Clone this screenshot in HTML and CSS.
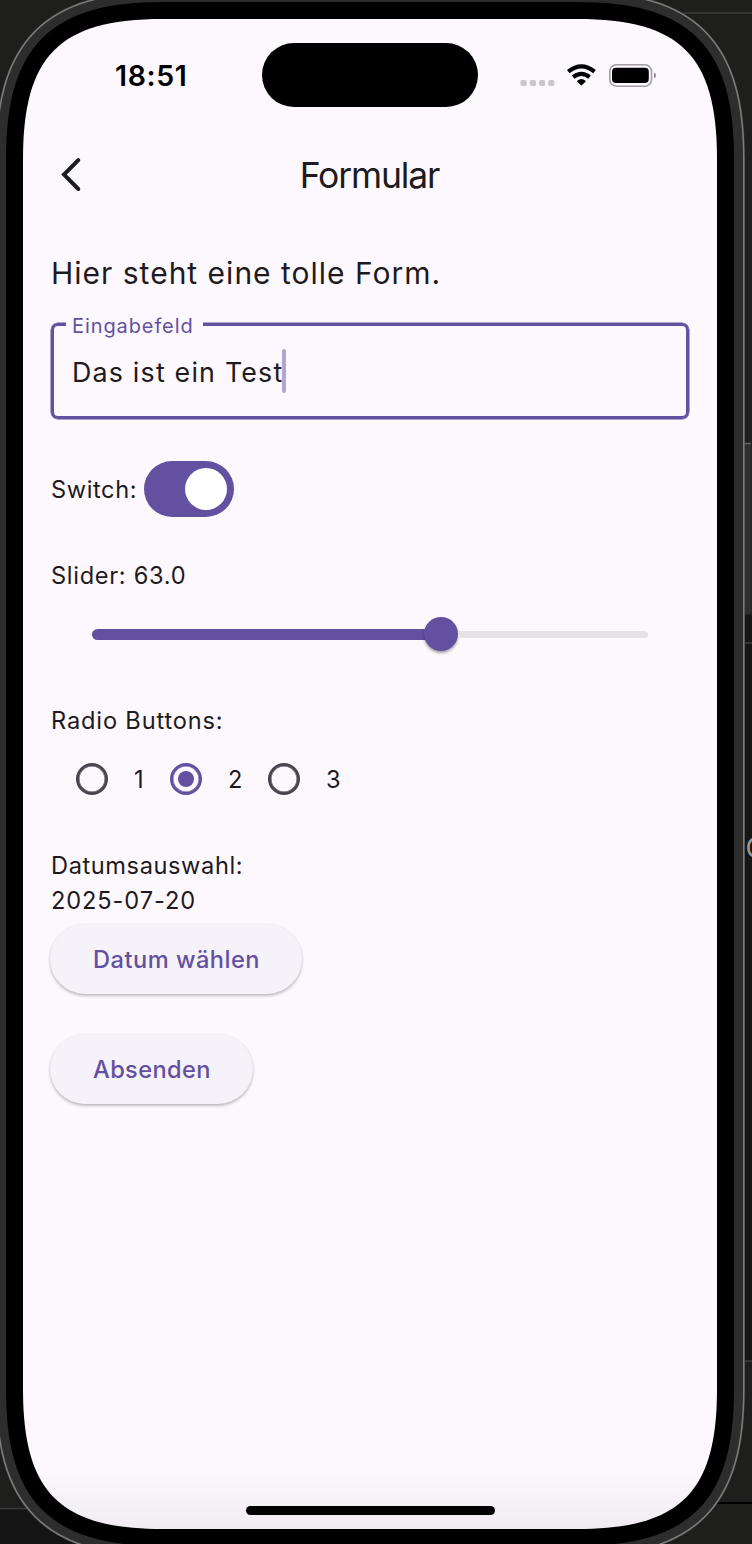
FILE: index.html
```html
<!DOCTYPE html>
<html lang="de">
<head>
<meta charset="utf-8">
<title>Formular</title>
<link rel="stylesheet" href="styles.css">
</head>
<body>
<div class="desktop">
  <svg class="backdrop" width="752" height="1544" viewBox="0 0 752 1544" aria-hidden="true">
    <defs>
      <linearGradient id="fade" x1="0" y1="1470" x2="0" y2="1529" gradientUnits="userSpaceOnUse">
        <stop offset="0" stop-color="#fdf8fe"/><stop offset="1" stop-color="#f1ecf2"/>
      </linearGradient>
      <path id="shape" d="M163 19 H577 C680.500 19 717 55.500 717 159 V1389 C717 1492.500 680.500 1529 577 1529 H163 C59.500 1529 23 1492.500 23 1389 V159 C23 55.500 59.500 19 163 19 z"/>
    </defs>
    <rect width="752" height="1544" fill="#1e1e1c"/>
    <path d="M680 13H752" stroke="#343434" stroke-width="2"/>
    <rect x="740" y="443.5" width="11.5" height="171" rx="4" fill="#2e2e2e"/>
    <path d="M740 443.5H751" stroke="#626262" stroke-width="1.5"/>
    <rect x="740" y="615" width="12" height="745" fill="#161616"/>
    <path d="M740 643H752M740 1361H752" stroke="#333" stroke-width="2"/>
    <path d="M700 1503H752" stroke="#000" stroke-width="2"/>
    <rect y="1509" width="100" height="35" fill="#141414"/>
    <path d="M0 1508.500H60" stroke="#3a3a3a" stroke-width="1.500"/>
    <text class="behind" x="745.500" y="858">C</text>
    <use href="#shape" fill="none" stroke="#3c3c3b" stroke-width="56"/>
    <use href="#shape" fill="none" stroke="#7c7c7c" stroke-width="55"/>
    <use href="#shape" fill="none" stroke="#2d2d2d" stroke-width="52"/>
    <use href="#shape" fill="none" stroke="#000" stroke-width="34"/>
    <use href="#shape" fill="url(#fade)"/>
  </svg>
  <main class="screen">
    <header class="status">
      <span class="time">18:51</span>
      <span class="island"></span>
      <svg class="indicators" width="138" height="24" viewBox="0 0 138 24" aria-label="Status">
        <g fill="#cac6cb"><rect x=".5" y="15" width="6.200" height="6" rx="1.800"/><rect x="9.800" y="15" width="6.200" height="6" rx="1.800"/><rect x="19" y="15" width="6.200" height="6" rx="1.800"/><rect x="28.200" y="15" width="6.200" height="6" rx="1.800"/></g>
        <g fill="none" stroke="#000" stroke-width="4.200"><path d="M48.300 6.700q13.100-10.600 26.200 0"/><path d="M53.200 12.100q8.200-6.500 16.400 0"/></g>
        <path d="M57.300 15.700q4.100-3.500 8.200 0q.5.500 0 1l-3.400 3.400q-.7.600-1.400 0L57.300 16.700q-.5-.5 0-1z"/>
        <rect x="89.800" y="-.200" width="41.700" height="21.400" rx="6.500" fill="none" stroke="#a19da2" stroke-width="1.600"/>
        <rect x="92" y="2.700" width="36.800" height="15.300" rx="4"/>
        <path d="M134 7.500q2 1.200 2 3t-2 3z" fill="#8c888d"/>
      </svg>
    </header>
    <div class="appbar">
      <svg class="back" width="24" height="36" viewBox="0 0 24 36"><path d="M19.300 3.200L5 17.600L19.300 32" fill="none" stroke="#1d1b20" stroke-width="4" stroke-linecap="round" stroke-linejoin="miter"/></svg>
      <h1 class="title"><span>Formular</span></h1>
    </div>
    <form class="form">
      <p class="intro"><span>Hier steht eine tolle Form.</span></p>
      <div class="field">
        <span class="field-label">Eingabefeld</span>
        <span class="field-value">Das ist ein Test</span><i class="caret"></i>
      </div>
      <div class="switch-row"><span class="sw-label">Switch:</span><span class="switch"><i class="knob"></i></span></div>
      <p class="text slider-label"><span>Slider: 63.0</span></p>
      <div class="slider"><i class="active"></i><i class="thumb"></i><i class="rest"></i></div>
      <p class="text radio-label"><span>Radio Buttons:</span></p>
      <div class="radios">
        <i class="radio"></i><span class="num n1">1</span>
        <i class="radio on"></i><span class="num n2">2</span>
        <i class="radio"></i><span class="num n3">3</span>
      </div>
      <p class="text date-label"><span>Datumsauswahl:</span></p>
      <p class="text date"><span>2025-07-20</span></p>
      <button type="button" class="button pick"><span>Datum wählen</span></button>
      <button type="button" class="button send"><span>Absenden</span></button>
    </form>
    <div class="home"></div>
  </main>
</div>
</body>
</html>
```
FILE: styles.css
```css
* { box-sizing: border-box; }
body { margin: 0; background: #1e1e1c; font-family: Inter, "Liberation Sans", sans-serif; color: #1d1b20; }
.desktop { position: relative; width: 752px; height: 1544px; overflow: hidden; padding: 19px 35px 15px 23px; }
.backdrop { position: absolute; left: 0; top: 0; }
.behind { font-size: 28px; fill: #999; }
.screen { position: relative; width: 694px; height: 1510px; display: flex; flex-direction: column; }
p, h1 { margin: 0; font-weight: 400; white-space: nowrap; }

.status { display: flex; height: 112px; padding-top: 24px; }
.time { width: 147px; margin-left: 92px; font-size: 28.500px; font-weight: 600; line-height: 66px; letter-spacing: .6px; color: #000; }
.island { width: 216px; height: 64px; border-radius: 32px; background: #000; }
.indicators { margin: 22px 0 0 42px; overflow: visible; }

.appbar { display: grid; grid-template-columns: 60px 1fr 60px; align-items: center; height: 88px; }
.back { margin-left: 36px; }
.title { text-align: center; padding: 1px 1px 0 0; font-size: 35.500px; line-height: 50px; letter-spacing: -1.150px; }

.form { display: flex; flex-direction: column; align-items: flex-start; padding-left: 28px; }
.intro { margin-top: 32px; height: 44px; line-height: 44px; font-size: 30px; letter-spacing: 1px; }
.field { position: relative; display: flex; width: 638px; height: 96px; margin-top: 28px; padding: 23px 0 0 18px; border: 3px solid #6450a0; border-radius: 7px; box-shadow: 0 0 0 .5px #6450a0; }
.field-label { position: absolute; left: 12px; top: -13px; padding: 0 9px 0 6px; background: #fdf8fe; color: #6450a0; font-size: 20px; line-height: 26px; letter-spacing: .9px; white-space: nowrap; }
.field-value { font-size: 26.800px; line-height: 46px; letter-spacing: 1.200px; white-space: nowrap; }
.caret { width: 3.500px; height: 44px; margin-left: -1px; border-radius: 2px; background: #b1a6d0; }
.switch-row { display: flex; align-items: center; height: 56px; margin-top: 42px; }
.sw-label, .text { font-size: 23.600px; letter-spacing: .7px; line-height: 34px; }
.sw-label { width: 93px; padding-top: 1px; letter-spacing: .6px; }
.switch { display: flex; justify-content: flex-end; width: 90px; height: 56px; padding: 7px; border-radius: 28px; background: #6450a0; }
.knob { width: 42px; height: 42px; border-radius: 50%; background: #fff; }
.slider-label { margin-top: 42px; }
.slider { display: flex; align-items: center; height: 36px; margin: 23px 0 0 41px; }
.active { width: 333px; height: 11px; border-radius: 6px 0 0 6px; background: #6450a0; }
.thumb { width: 34px; height: 34px; margin-left: -1px; border-radius: 50%; background: #6450a0; box-shadow: 0 2px 3px rgba(0,0,0,.35); }
.rest { width: 190px; height: 7px; border-radius: 0 4px 4px 0; background: #e6e0e9; }
.radio-label { margin-top: 52px; }
.radio-label span { letter-spacing: .850px; }
.radios { display: flex; align-items: center; height: 40px; margin: 21px 0 0 25px; font-size: 23.600px; }
.radio { display: flex; width: 32px; height: 32px; border: 3px solid #49454f; border-radius: 50%; box-shadow: inset 0 0 0 .5px #49454f; }
.radio.on { border-color: #6450a0; box-shadow: inset 0 0 0 .5px #6450a0; }
.radio.on::after { content: ""; width: 16px; height: 16px; margin: auto; border-radius: 50%; background: #6450a0; }
.num { padding-left: 26px; }
.n1 { width: 62px; }
.n2 { width: 66px; }
.date-label { margin-top: 50px; }
.date-label span { letter-spacing: .600px; }
.date { margin-top: 1px; }
.date span { letter-spacing: .900px; }
.button { height: 70px; padding: 0 0 0 43px; border: 0; border-radius: 35px; background: #f5f2f9; color: #6450a0; font: 500 23.600px/71px Inter, sans-serif; letter-spacing: .5px; text-align: left; white-space: nowrap; box-shadow: 0 2px 3px rgba(0,0,0,.24), 0 0 2px rgba(0,0,0,.07); }
.pick { width: 252px; margin: 6px 0 0 -1px; }
.send { width: 203px; margin: 40px 0 0 -1px; letter-spacing: .4px; }
.home { width: 249px; height: 9px; margin: auto auto 14px 223px; border-radius: 5px; background: #000; }
```
